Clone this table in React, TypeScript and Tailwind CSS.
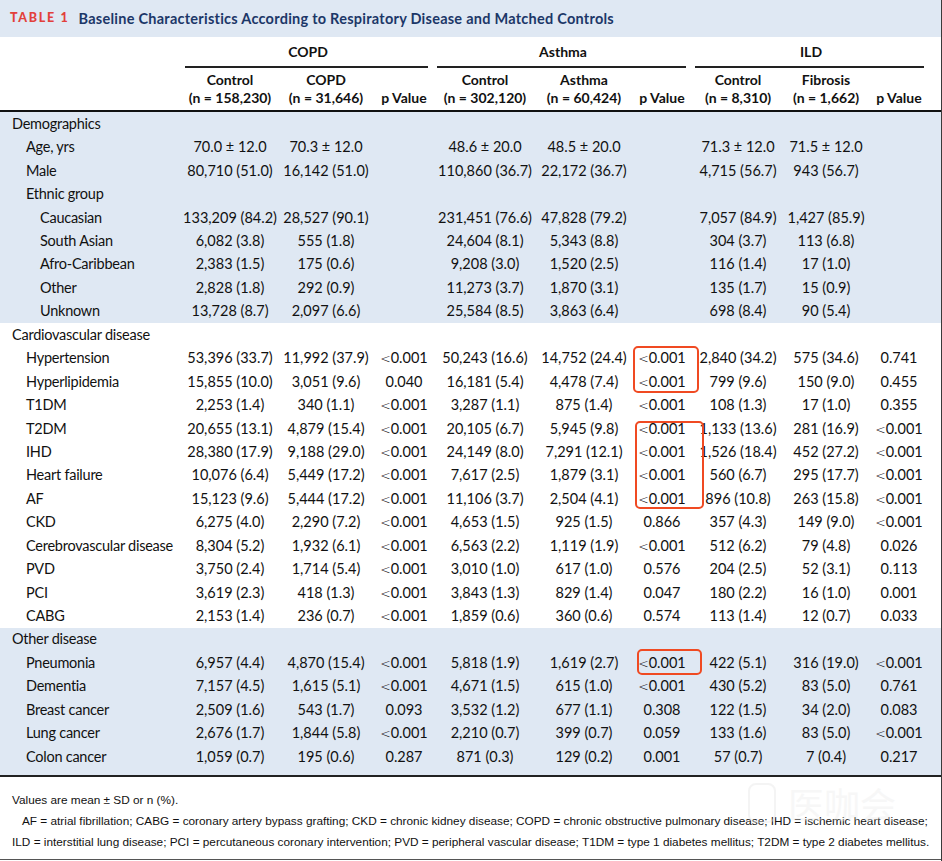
import type { ReactNode } from "react";

type Row = {
  label: string;
  level: 0 | 1 | 2;
  values?: string[];
};

type Section = {
  bg: string;
  rows: Row[];
};

const GRID =
  "grid grid-cols-[182px_96px_96px_60px_102px_96px_60px_92px_84px_62px]";

const SECTIONS: Section[] = [
  {
    bg: "bg-[#dfe8f3]",
    rows: [
      { label: "Demographics", level: 0 },
      {
        label: "Age, yrs",
        level: 1,
        values: ["70.0 ± 12.0", "70.3 ± 12.0", "", "48.6 ± 20.0", "48.5 ± 20.0", "", "71.3 ± 12.0", "71.5 ± 12.0", ""],
      },
      {
        label: "Male",
        level: 1,
        values: ["80,710 (51.0)", "16,142 (51.0)", "", "110,860 (36.7)", "22,172 (36.7)", "", "4,715 (56.7)", "943 (56.7)", ""],
      },
      { label: "Ethnic group", level: 1 },
      {
        label: "Caucasian",
        level: 2,
        values: ["133,209 (84.2)", "28,527 (90.1)", "", "231,451 (76.6)", "47,828 (79.2)", "", "7,057 (84.9)", "1,427 (85.9)", ""],
      },
      {
        label: "South Asian",
        level: 2,
        values: ["6,082 (3.8)", "555 (1.8)", "", "24,604 (8.1)", "5,343 (8.8)", "", "304 (3.7)", "113 (6.8)", ""],
      },
      {
        label: "Afro-Caribbean",
        level: 2,
        values: ["2,383 (1.5)", "175 (0.6)", "", "9,208 (3.0)", "1,520 (2.5)", "", "116 (1.4)", "17 (1.0)", ""],
      },
      {
        label: "Other",
        level: 2,
        values: ["2,828 (1.8)", "292 (0.9)", "", "11,273 (3.7)", "1,870 (3.1)", "", "135 (1.7)", "15 (0.9)", ""],
      },
      {
        label: "Unknown",
        level: 2,
        values: ["13,728 (8.7)", "2,097 (6.6)", "", "25,584 (8.5)", "3,863 (6.4)", "", "698 (8.4)", "90 (5.4)", ""],
      },
    ],
  },
  {
    bg: "bg-white",
    rows: [
      { label: "Cardiovascular disease", level: 0 },
      {
        label: "Hypertension",
        level: 1,
        values: ["53,396 (33.7)", "11,992 (37.9)", "<0.001", "50,243 (16.6)", "14,752 (24.4)", "<0.001", "2,840 (34.2)", "575 (34.6)", "0.741"],
      },
      {
        label: "Hyperlipidemia",
        level: 1,
        values: ["15,855 (10.0)", "3,051 (9.6)", "0.040", "16,181 (5.4)", "4,478 (7.4)", "<0.001", "799 (9.6)", "150 (9.0)", "0.455"],
      },
      {
        label: "T1DM",
        level: 1,
        values: ["2,253 (1.4)", "340 (1.1)", "<0.001", "3,287 (1.1)", "875 (1.4)", "<0.001", "108 (1.3)", "17 (1.0)", "0.355"],
      },
      {
        label: "T2DM",
        level: 1,
        values: ["20,655 (13.1)", "4,879 (15.4)", "<0.001", "20,105 (6.7)", "5,945 (9.8)", "<0.001", "1,133 (13.6)", "281 (16.9)", "<0.001"],
      },
      {
        label: "IHD",
        level: 1,
        values: ["28,380 (17.9)", "9,188 (29.0)", "<0.001", "24,149 (8.0)", "7,291 (12.1)", "<0.001", "1,526 (18.4)", "452 (27.2)", "<0.001"],
      },
      {
        label: "Heart failure",
        level: 1,
        values: ["10,076 (6.4)", "5,449 (17.2)", "<0.001", "7,617 (2.5)", "1,879 (3.1)", "<0.001", "560 (6.7)", "295 (17.7)", "<0.001"],
      },
      {
        label: "AF",
        level: 1,
        values: ["15,123 (9.6)", "5,444 (17.2)", "<0.001", "11,106 (3.7)", "2,504 (4.1)", "<0.001", "896 (10.8)", "263 (15.8)", "<0.001"],
      },
      {
        label: "CKD",
        level: 1,
        values: ["6,275 (4.0)", "2,290 (7.2)", "<0.001", "4,653 (1.5)", "925 (1.5)", "0.866", "357 (4.3)", "149 (9.0)", "<0.001"],
      },
      {
        label: "Cerebrovascular disease",
        level: 1,
        values: ["8,304 (5.2)", "1,932 (6.1)", "<0.001", "6,563 (2.2)", "1,119 (1.9)", "<0.001", "512 (6.2)", "79 (4.8)", "0.026"],
      },
      {
        label: "PVD",
        level: 1,
        values: ["3,750 (2.4)", "1,714 (5.4)", "<0.001", "3,010 (1.0)", "617 (1.0)", "0.576", "204 (2.5)", "52 (3.1)", "0.113"],
      },
      {
        label: "PCI",
        level: 1,
        values: ["3,619 (2.3)", "418 (1.3)", "<0.001", "3,843 (1.3)", "829 (1.4)", "0.047", "180 (2.2)", "16 (1.0)", "0.001"],
      },
      {
        label: "CABG",
        level: 1,
        values: ["2,153 (1.4)", "236 (0.7)", "<0.001", "1,859 (0.6)", "360 (0.6)", "0.574", "113 (1.4)", "12 (0.7)", "0.033"],
      },
    ],
  },
  {
    bg: "bg-[#dfe8f3] pb-[7px]",
    rows: [
      { label: "Other disease", level: 0 },
      {
        label: "Pneumonia",
        level: 1,
        values: ["6,957 (4.4)", "4,870 (15.4)", "<0.001", "5,818 (1.9)", "1,619 (2.7)", "<0.001", "422 (5.1)", "316 (19.0)", "<0.001"],
      },
      {
        label: "Dementia",
        level: 1,
        values: ["7,157 (4.5)", "1,615 (5.1)", "<0.001", "4,671 (1.5)", "615 (1.0)", "<0.001", "430 (5.2)", "83 (5.0)", "0.761"],
      },
      {
        label: "Breast cancer",
        level: 1,
        values: ["2,509 (1.6)", "543 (1.7)", "0.093", "3,532 (1.2)", "677 (1.1)", "0.308", "122 (1.5)", "34 (2.0)", "0.083"],
      },
      {
        label: "Lung cancer",
        level: 1,
        values: ["2,676 (1.7)", "1,844 (5.8)", "<0.001", "2,210 (0.7)", "399 (0.7)", "0.059", "133 (1.6)", "83 (5.0)", "<0.001"],
      },
      {
        label: "Colon cancer",
        level: 1,
        values: ["1,059 (0.7)", "195 (0.6)", "0.287", "871 (0.3)", "129 (0.2)", "0.001", "57 (0.7)", "7 (0.4)", "0.217"],
      },
    ],
  },
];

const INDENT = ["pl-[12px]", "pl-[26px]", "pl-[40px]"];

const SUBHEADS = [
  ["Control", "(n = 158,230)"],
  ["COPD", "(n = 31,646)"],
  ["", "p Value"],
  ["Control", "(n = 302,120)"],
  ["Asthma", "(n = 60,424)"],
  ["", "p Value"],
  ["Control", "(n = 8,310)"],
  ["Fibrosis", "(n = 1,662)"],
  ["", "p Value"],
];

function GroupHead({ children, span }: { children: ReactNode; span: string }) {
  return (
    <div className={`${span} flex flex-col items-center`}>
      <div className="h-[29px] flex items-center">{children}</div>
      <div className="self-stretch ml-[3px] mr-[6px] h-[2px] bg-[#222]" />
    </div>
  );
}

function Value({ v }: { v: string }) {
  // the "<" in the p values is a wide math sign
  if (v.startsWith("<")) {
    return (
      <>
        <span className="font-['DejaVu_Sans',sans-serif] font-light text-[12.5px]">&lt;</span>
        {v.slice(1)}
      </>
    );
  }
  return <>{v}</>;
}

function TableRow({ row }: { row: Row }) {
  return (
    <div className={`${GRID} h-[23.44px] items-center`}>
      <div className={`${INDENT[row.level]} whitespace-nowrap tracking-[-0.25px]`}>
        {row.label}
      </div>
      {row.values?.map((v, i) => (
        <div key={i} className="text-center whitespace-nowrap">
          <Value v={v} />
        </div>
      ))}
    </div>
  );
}

function RedBox({ className }: { className: string }) {
  return (
    <div
      className={`absolute border-[2.5px] border-[#f04a22] rounded-[5px] pointer-events-none ${className}`}
    />
  );
}

export default function App() {
  return (
    <div className="relative w-[942px] h-[861px] overflow-hidden bg-white border-r border-[#3a3a3a] text-[#111] font-['Lato',sans-serif]">
      {/* Title band */}
      <div className="h-[37px] bg-[#dfe8f3] flex items-center pl-[10px]">
        <span className="text-[#e2403b] font-black text-[12.5px] tracking-[1.7px]">
          TABLE 1
        </span>
        <span className="ml-[9px] text-[#1c3768] font-bold text-[14.5px] tracking-[0.25px]">
          Baseline Characteristics According to Respiratory Disease and Matched Controls
        </span>
      </div>

      {/* Column headers */}
      <div className="border-b-2 border-[#111] text-[14px] font-bold">
        <div className={`${GRID}`}>
          <div />
          <GroupHead span="col-span-3">COPD</GroupHead>
          <GroupHead span="col-span-3">Asthma</GroupHead>
          <GroupHead span="col-span-3">ILD</GroupHead>
        </div>
        <div className={`${GRID} pt-[3px] pb-[3px] leading-[18px]`}>
          <div />
          {SUBHEADS.map(([a, b], i) => (
            <div key={i} className="flex flex-col items-center whitespace-nowrap">
              <div className="h-[18px]">{a}</div>
              <div>{b}</div>
            </div>
          ))}
        </div>
      </div>

      {/* Body */}
      <div className="border-b-2 border-[#222] text-[14.5px]">
        {SECTIONS.map((s, i) => (
          <div key={i} className={s.bg}>
            {s.rows.map((r) => (
              <TableRow key={r.label} row={r} />
            ))}
          </div>
        ))}
      </div>

      {/* Footnotes */}
      <div className="relative border-b border-[#555] h-[83px] pt-[13px] text-[11.8px] leading-[21px] text-[#111] font-['Liberation_Sans',sans-serif]">
        <div className="pl-[12px]">Values are mean ± SD or n (%).</div>
        <div className="pl-[22px] whitespace-nowrap">
          AF = atrial fibrillation; CABG = coronary artery bypass grafting; CKD = chronic kidney disease; COPD = chronic obstructive pulmonary disease; IHD = ischemic heart disease;
        </div>
        <div className="pl-[12px] whitespace-nowrap">
          ILD = interstitial lung disease; PCI = percutaneous coronary intervention; PVD = peripheral vascular disease; T1DM = type 1 diabetes mellitus; T2DM = type 2 diabetes mellitus.
        </div>
        <div className="absolute left-[748px] top-[6px] flex items-center gap-[12px] pointer-events-none opacity-40">
          <div className="w-[28px] h-[40px] rounded-[8px] border-[2px] border-[#e4e4e4]" />
          <span className="text-[36px] leading-none text-[#ececec] font-['Noto_Sans_CJK_SC',sans-serif]">
            医咖会
          </span>
        </div>
      </div>

      {/* Highlight boxes */}
      <RedBox className="left-[633px] top-[346px] w-[66px] h-[47px]" />
      <RedBox className="left-[635px] top-[421px] w-[69px] h-[88px]" />
      <RedBox className="left-[637px] top-[649px] w-[65px] h-[26px]" />
    </div>
  );
}
